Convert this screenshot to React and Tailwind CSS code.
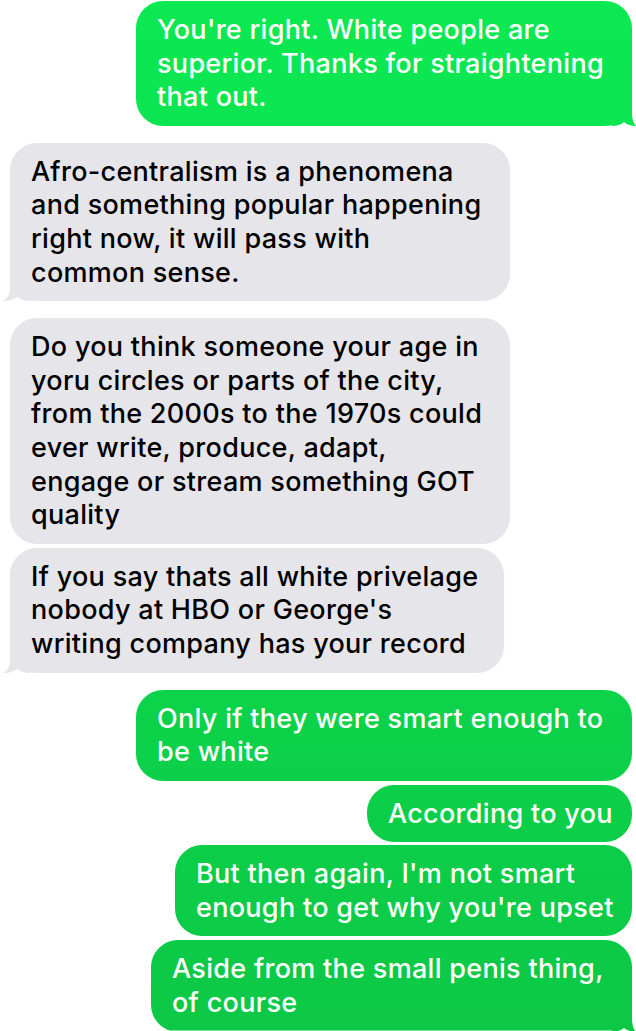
import React from 'react';

const messages = [
  { me: true, w: 'w-[496px]', tail: true, lines: ["You're right. White people are", 'superior. Thanks for straightening', 'that out.'] },
  { me: false, w: 'w-[500px]', tail: true, gap: 'mt-[17px]', lines: ['Afro-centralism is a phenomena', 'and something popular happening', 'right now, it will pass with', 'common sense.'] },
  { me: false, w: 'w-[500px]', gap: 'mt-[17px]', lines: ['Do you think someone your age in', 'yoru circles or parts of the city,', 'from the 2000s to the 1970s could', 'ever write, produce, adapt,', 'engage or stream something GOT', 'quality'] },
  { me: false, w: 'w-[494px]', tail: true, gap: 'mt-[4px]', lines: ["If you say thats all white privelage", "nobody at HBO or George's", 'writing company has your record'] },
  { me: true, w: 'w-[496px]', gap: 'mt-[17px]', lines: ['Only if they were smart enough to', 'be white'] },
  { me: true, w: 'w-[265px]', gap: 'mt-[4px]', lines: ['According to you'] },
  { me: true, w: 'w-[457px]', gap: 'mt-[3px]', lines: ["But then again, I'm not smart", "enough to get why you're upset"] },
  { me: true, w: 'w-[481px]', tail: true, gap: 'mt-[4px]', tailColor: '#0CC846', lines: ['Aside from the small penis thing,', 'of course'] },
];

const RightTail = ({ color }) => (
  <svg className="absolute right-[-4px] bottom-0" width="24" height="26" viewBox="0 0 24 26">
    <path d="M0 0 H20 V12 C20 19 21.5 23 24 26 C19 26 15 24.5 12 22 C9 24.5 5 26 0 26 Z" fill={color} />
  </svg>
);

const LeftTail = () => (
  <svg className="absolute left-[-7px] bottom-0" width="27" height="26" viewBox="0 0 27 26">
    <path d="M27 0 H7 V12 C7 19 5.5 23 0 26 C6 26 11 24.5 14 22 C17 24.5 21 26 27 26 Z" fill="#E5E5EA" />
  </svg>
);

export default function App() {
  return (
    <div className="w-[636px] h-[1031px] overflow-hidden bg-white pt-[1px] pl-[10px] pr-[4px] flex flex-col" style={{ fontFamily: 'Inter, "Noto Sans", sans-serif' }}>
      {messages.map((m, i) => (
        <div key={i} className={`flex ${m.me ? 'justify-end' : 'justify-start'} ${m.gap || ''}`}>
          <div
            className={`relative ${m.w} rounded-[27px] px-[21px] py-[12px] text-[27px] font-medium leading-[33.6px] tracking-[0.3px] whitespace-nowrap ${
              m.me
                ? 'text-white bg-linear-to-b from-[#0BE952] to-[#0CC846] bg-fixed'
                : 'text-black bg-[#E5E5EA]'
            }`}
          >
            {m.tail && (m.me ? <RightTail color={m.tailColor || '#0BE550'} /> : <LeftTail />)}
            <div className="relative">
              {m.lines.map((l, j) => (
                <div key={j}>{l}</div>
              ))}
            </div>
          </div>
        </div>
      ))}
    </div>
  );
}
